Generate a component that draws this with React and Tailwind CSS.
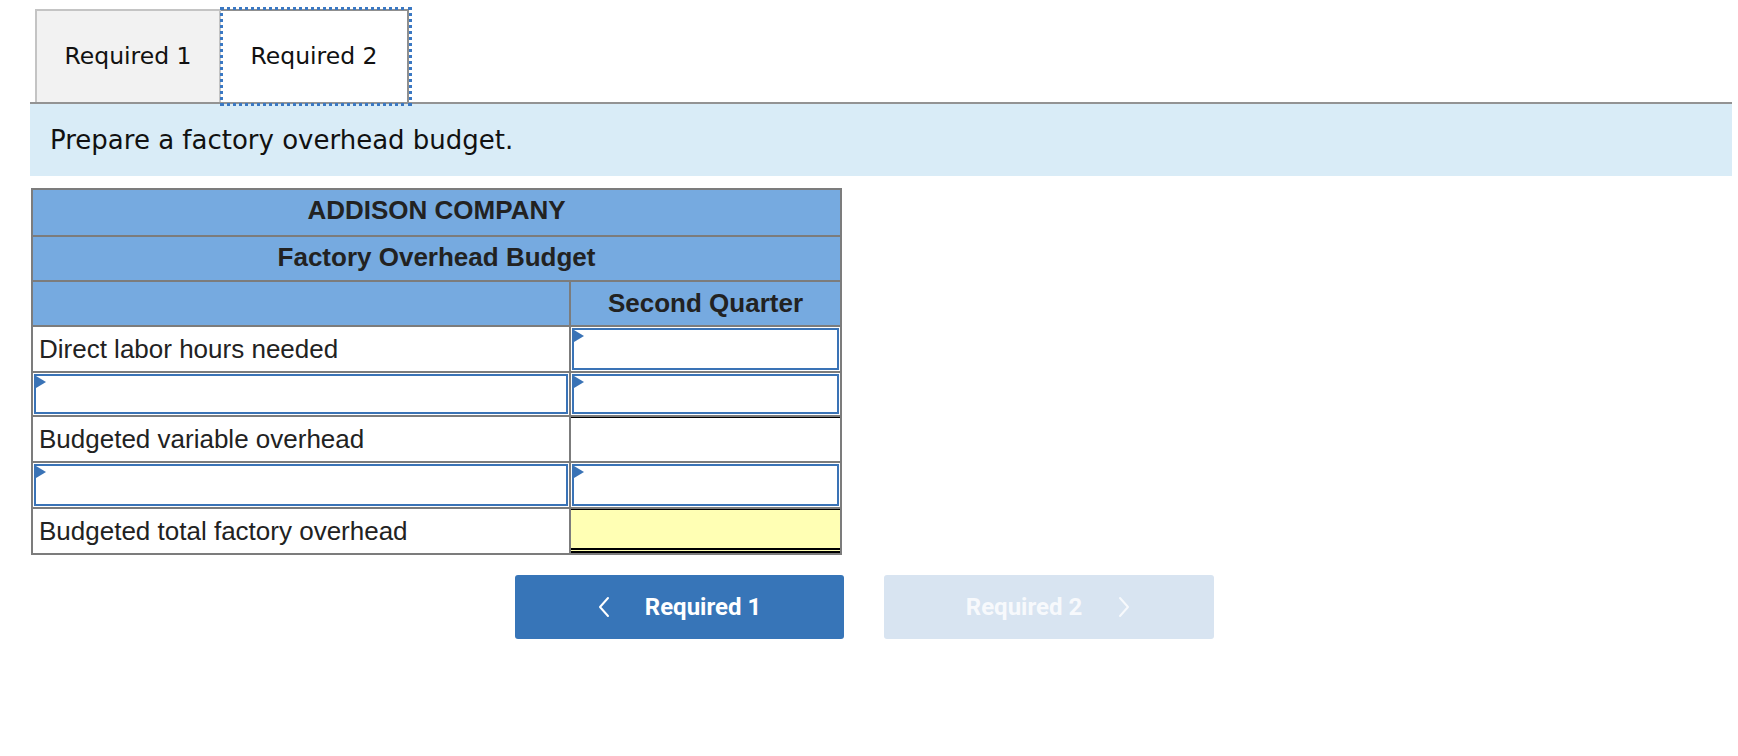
import React from 'react'

const cell = 'border-2 border-[#7c7c7c] p-0 h-[45px]'
const label = 'pl-[6px] text-[26px] text-[#222] leading-none'

function Marker() {
  return (
    <span className="absolute left-0 top-0 w-0 h-0 border-y-[6px] border-y-transparent border-l-[10px] border-l-[#3a73b6]" />
  )
}

function InputBox({ h = 'h-[42px]' }) {
  return (
    <div className={'relative m-[1px] border-2 border-[#3a73b6] bg-white ' + h}>
      <Marker />
    </div>
  )
}

function Chevron({ dir }) {
  return (
    <svg width="14" height="22" viewBox="0 0 14 22" fill="none" stroke="currentColor" strokeWidth="2" strokeLinecap="round" strokeLinejoin="round">
      {dir === 'left' ? <polyline points="11,2 3,11 11,20" /> : <polyline points="3,2 11,11 3,20" />}
    </svg>
  )
}

export default function App() {
  return (
    <div className="w-[1738px] min-h-screen bg-white font-['DejaVu_Sans',Verdana,sans-serif]">
      <div className="ml-[30px] w-[1702px] pt-[9px]">
        {/* tabs */}
        <div className="flex pl-[5px] h-[93px]">
          <div className="w-[186px] h-full bg-[#f2f2f2] border-2 border-b-0 border-[#c4c4c4] flex items-center justify-center text-[23.5px] text-[#111]">
            Required 1
          </div>
          <div className="relative w-[188px] h-full bg-white border-2 border-l-0 border-b-0 border-[#8f8f8f] flex items-center justify-center text-[23.5px] text-[#111]">
            Required 2
            <span className="absolute left-[-1px] top-[-4px] right-[-5px] bottom-[-4px] border-[3px] border-dotted border-[#3a78c3]" />
          </div>
        </div>
        <div className="h-[2px] bg-[#939393]" />
        <div className="h-[72px] bg-[#d9ecf7] flex items-center pl-[20px] text-[26px] text-[#111]">
          Prepare a factory overhead budget.
        </div>

        {/* table */}
        <table className="mt-[12px] ml-[1px] w-[811px] border-collapse font-['Liberation_Sans',Arial,sans-serif]">
          <tbody>
            <tr className="bg-[#76aae0]">
              <td colSpan={2} className="border-2 border-[#7c7c7c] p-0 h-[47px] text-center font-bold text-[26px] text-[#222] pb-[4px]">ADDISON COMPANY</td>
            </tr>
            <tr className="bg-[#76aae0]">
              <td colSpan={2} className={cell + ' text-center font-bold text-[26px] text-[#222] pb-[2px]'}>Factory Overhead Budget</td>
            </tr>
            <tr className="bg-[#76aae0]">
              <td className={cell + ' w-[538px]'}></td>
              <td className={cell + ' text-center font-bold text-[26px] text-[#222]'}>Second Quarter</td>
            </tr>
            <tr>
              <td className={cell}><div className={label}>Direct labor hours needed</div></td>
              <td className={cell}><InputBox /></td>
            </tr>
            <tr>
              <td className="border-2 border-[#7c7c7c] p-0 h-[43px]"><InputBox h="h-[40px]" /></td>
              <td className="border-2 border-[#7c7c7c] p-0 h-[43px]"><InputBox h="h-[40px]" /></td>
            </tr>
            <tr>
              <td className={cell}><div className={label}>Budgeted variable overhead</div></td>
              <td className={cell}><div className="h-[44px] border-t border-black bg-white" /></td>
            </tr>
            <tr>
              <td className={cell}><InputBox /></td>
              <td className={cell}><InputBox /></td>
            </tr>
            <tr>
              <td className={cell}><div className={label}>Budgeted total factory overhead</div></td>
              <td className={cell}>
                <div className="h-[44px] border-double border-t border-b-[5px] border-x-0 border-black bg-[#ffffb4]" />
              </td>
            </tr>
          </tbody>
        </table>
      </div>

      {/* nav buttons */}
      <div className="w-[1728px] mt-[20px] flex justify-center gap-[40px] font-['Roboto',sans-serif]">
        <button className="w-[329px] h-[64px] rounded-[3px] bg-[#3775b8] text-white flex items-center justify-center gap-[34px]">
          <Chevron dir="left" />
          <span className="text-[24px] font-bold">Required 1</span>
        </button>
        <button className="w-[330px] h-[64px] rounded-[3px] bg-[#d8e4f1] text-[#f7f9fc] flex items-center justify-center gap-[35px]">
          <span className="text-[24px] font-bold">Required 2</span>
          <Chevron dir="right" />
        </button>
      </div>
    </div>
  )
}
